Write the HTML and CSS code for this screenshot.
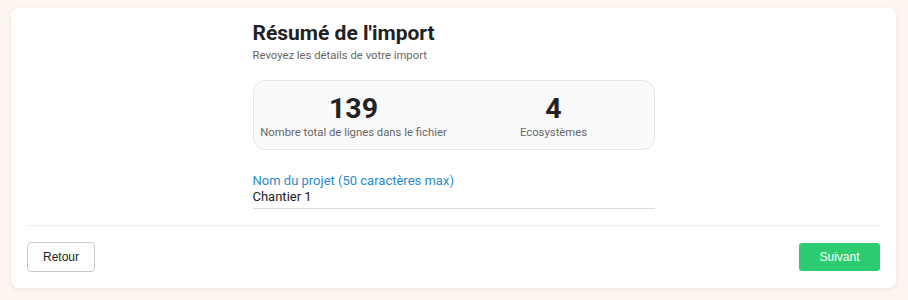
FILE: index.html
```html
<!DOCTYPE html>
<html lang="fr">
<head>
  <meta charset="UTF-8">
  <meta name="viewport" content="width=device-width, initial-scale=1.0">
  <title>Résumé de l'import</title>
  <link rel="stylesheet" href="styles.css">
</head>
<body>
  <div class="card">
    <div class="summary">
      <h1>Résumé de l'import</h1>
      <p class="subtitle">Revoyez les détails de votre import</p>

      <div class="stats">
        <div class="stat">
          <span class="stat-value">139</span>
          <span class="stat-label">Nombre total de lignes dans le fichier</span>
        </div>
        <div class="stat">
          <span class="stat-value">4</span>
          <span class="stat-label">Ecosystèmes</span>
        </div>
      </div>

      <div class="field">
        <label for="project-name">Nom du projet (50 caractères max)</label>
        <input type="text" id="project-name" maxlength="50" value="Chantier 1">
      </div>
    </div>

    <div class="actions">
      <button class="btn btn-back">Retour</button>
      <button class="btn btn-next">Suivant</button>
    </div>
  </div>
</body>
</html>
```

FILE: styles.css
```css
/* base */
body { margin: 0; padding: 8px 12px 12px 11px; background: #fdf5ef; font-family: Roboto, "Liberation Sans", sans-serif; color: #222; }

.card { background: #fff; border-radius: 8px; box-shadow: 0 1px 4px rgba(120, 90, 60, 0.12); padding: 12px 16px 16px; }

/* summary column */
.summary { width: 402px; margin: 0 auto; }
h1 { margin: 0; font-size: 21px; line-height: 26px; font-weight: 700; color: #222; }
.subtitle { margin: 3px 0 0; font-size: 11.3px; line-height: 14px; color: #666; }

.stats { display: grid; grid-template-columns: 1fr 1fr; margin-top: 17px; height: 70px; border: 1px solid #e6e6e6; border-radius: 12px; background: #fafafa; box-sizing: border-box; }
.stat { display: flex; flex-direction: column; align-items: center; padding-top: 11px; }
.stat-value { font-size: 28.5px; line-height: 33px; font-weight: 700; color: #222; }
.stat-label { font-size: 11.3px; line-height: 14px; color: #666; margin-top: 1px; }

.field { margin-top: 23px; display: flex; flex-direction: column; }
.field label { font-size: 13px; line-height: 16px; color: #2a8bcb; }
.field input { border: none; border-bottom: 1px solid #ddd; padding: 0 0 3px; font: inherit; font-size: 13px; line-height: 16px; color: #222; outline: none; }

/* footer */
.actions { display: flex; justify-content: space-between; align-items: center; margin-top: 16px; padding-top: 16px; border-top: 1px solid #eee; }
.btn { font-family: "Liberation Sans", Arial, sans-serif; font-size: 12px; cursor: pointer; }
.btn-back { width: 68px; height: 30px; background: #fff; border: 1px solid #c8c8c8; border-radius: 4px; color: #222; }
.btn-next { width: 81px; height: 28px; background: #2ecc71; border: none; border-radius: 3px; color: #fff; }
```
